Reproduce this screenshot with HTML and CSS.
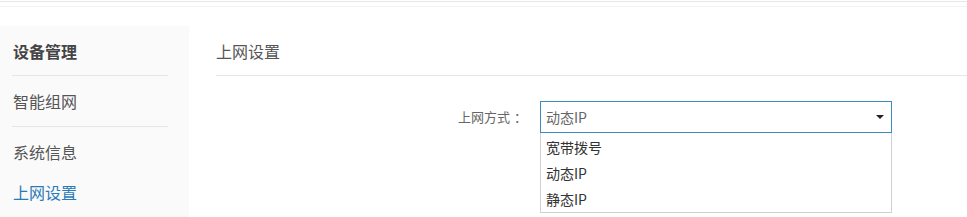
FILE: index.html
```html
<!DOCTYPE html>
<html lang="zh-CN">
<head>
    <meta charset="UTF-8">
    <title>上网设置</title>
    <link rel="stylesheet" href="styles.css">
</head>
<body>
    <div class="topline"></div>

    <div class="layout">
        <div class="sidebar">
            <div class="side-title">设备管理</div>
            <div class="side-item">智能组网</div>
            <div class="side-item plain">系统信息</div>
            <div class="side-item plain short active">上网设置</div>
        </div>

        <div class="main">
            <div class="main-title">上网设置</div>

            <div class="form-row">
                <label class="form-label">上网方式<span class="colon">：</span></label>
                <div class="select-wrap">
                    <div class="select-box">
                        <span class="select-value">动态IP</span>
                        <span class="select-caret"></span>
                    </div>
                    <div class="select-options">
                        <div class="option">宽带拨号</div>
                        <div class="option">动态IP</div>
                        <div class="option">静态IP</div>
                    </div>
                </div>
            </div>
        </div>
    </div>
</body>
</html>
```

FILE: styles.css
```css
* {
    margin: 0;
    padding: 0;
    box-sizing: border-box;
}

body {
    font-family: "Noto Sans CJK SC", "Liberation Sans", sans-serif;
    background: #fff;
    color: #555;
    overflow: hidden;
}

.topline {
    margin-top: 1px;
    height: 6px;
    border-top: 1px solid #e6e6e6;
    border-bottom: 1px solid #f3f3f3;
}

.layout {
    display: flex;
    margin-top: 19px;
    height: 200px;
}

.sidebar {
    width: 189px;
    background: #fafafa;
    padding: 0 21px 0 12px;
}

.side-title {
    height: 50px;
    line-height: 50px;
    font-size: 16px;
    font-weight: bold;
    color: #444;
    border-bottom: 1px solid #e6e6e6;
    padding-left: 1px;
}

.side-item {
    height: 51px;
    line-height: 50px;
    font-size: 16px;
    color: #555;
    border-bottom: 1px solid #e6e6e6;
    padding-left: 1px;
}

.side-item.plain {
    border-bottom: none;
}

.side-item.short {
    height: 28px;
    line-height: 28px;
}

.side-item.active {
    color: #2a7ab8;
}

.main {
    flex: 1;
    margin-left: 27px;
}

.main-title {
    height: 50px;
    line-height: 50px;
    font-size: 16px;
    color: #555;
    border-bottom: 1px solid #e6e6e6;
}

.form-row {
    display: flex;
    margin-top: 25px;
}

.form-label {
    width: 311px;
    text-align: right;
    font-size: 13px;
    color: #666;
    line-height: 32px;
    margin-right: 13px;
}

.colon {
    margin-left: 4px;
}

.select-wrap {
    width: 352px;
}

.select-box {
    height: 32px;
    border: 1px solid #3c8dbc;
    display: flex;
    align-items: center;
    justify-content: space-between;
    padding: 0 6px 0 5px;
}

.select-value {
    font-size: 14px;
    color: #666;
}

.select-caret {
    width: 0;
    height: 0;
    border-left: 4px solid transparent;
    border-right: 4px solid transparent;
    border-top: 4px solid #222;
    margin-right: 1px;
}

.select-options {
    border: 1px solid #d2d2d2;
    border-top: none;
    padding-top: 1px;
}

.option {
    height: 26px;
    line-height: 26px;
    font-size: 14px;
    color: #333;
    padding-left: 5px;
}
```
